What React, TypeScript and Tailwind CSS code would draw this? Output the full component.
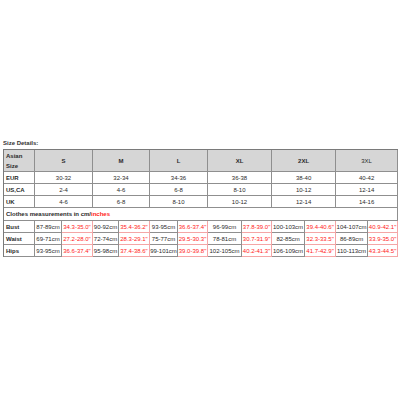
import React from "react";

const sizes = ["S", "M", "L", "XL", "2XL", "3XL"];
const eur = ["30-32", "32-34", "34-36", "36-38", "38-40", "40-42"];
const us = ["2-4", "4-6", "6-8", "8-10", "10-12", "12-14"];
const uk = ["4-6", "6-8", "8-10", "10-12", "12-14", "14-16"];

const meas: { label: string; vals: [string, string][] }[] = [
  {
    label: "Bust",
    vals: [
      ["87-89cm", "34.3-35.0\""],
      ["90-92cm", "35.4-36.2\""],
      ["93-95cm", "36.6-37.4\""],
      ["96-99cm", "37.8-39.0\""],
      ["100-103cm", "39.4-40.6\""],
      ["104-107cm", "40.9-42.1\""],
    ],
  },
  {
    label: "Waist",
    vals: [
      ["69-71cm", "27.2-28.0\""],
      ["72-74cm", "28.3-29.1\""],
      ["75-77cm", "29.5-30.3\""],
      ["78-81cm", "30.7-31.9\""],
      ["82-85cm", "32.3-33.5\""],
      ["86-89cm", "33.9-35.0\""],
    ],
  },
  {
    label: "Hips",
    vals: [
      ["93-95cm", "36.6-37.4\""],
      ["95-98cm", "37.4-38.6\""],
      ["99-101cm", "39.0-39.8\""],
      ["102-105cm", "40.2-41.3\""],
      ["106-109cm", "41.7-42.9\""],
      ["110-113cm", "43.3-44.5\""],
    ],
  },
];

const cell = "border-r border-b border-[#8f8f8f] p-0 align-middle";
const pink = "border-r border-b border-[#f4a6a6] p-0 align-middle";

export default function App() {
  return (
    <div
      className="bg-white w-[400px] h-[400px] pt-[139px] px-[3px] text-[6px] leading-[8px] text-[#2a2a2a]"
      style={{ fontFamily: '"Liberation Sans", Arial, sans-serif' }}
    >
      <div className="font-bold h-[10px] text-[#333]">Size Details:</div>
      <table className="border-separate border-spacing-0 table-fixed w-[394px] border-t border-l border-[#7a7a7a]">
        <colgroup>
          <col className="w-[31px]" />
          <col className="w-[27px]" />
          <col className="w-[31px]" />
          <col className="w-[26px]" />
          <col className="w-[31px]" />
          <col className="w-[28px]" />
          <col className="w-[30px]" />
          <col className="w-[34px]" />
          <col className="w-[30px]" />
          <col className="w-[33px]" />
          <col className="w-[31px]" />
          <col className="w-[32px]" />
          <col className="w-[30px]" />
        </colgroup>
        <tbody>
          <tr className="h-[22px] bg-[#d6d6d6]">
            <td className={`${cell} font-bold text-left pl-[2px] leading-[10px]`}>
              Asian
              <br />
              Size
            </td>
            {sizes.map((s, i) => (
              <td
                key={s}
                colSpan={2}
                className={`${cell} text-center ${i === 5 ? "font-normal" : "font-bold"}`}
              >
                {s}
              </td>
            ))}
          </tr>
          {[
            ["EUR", eur],
            ["US,CA", us],
            ["UK", uk],
          ].map(([label, vals]) => (
            <tr key={label as string} className="h-[12px]">
              <td className={`${cell} font-bold text-left pl-[2px]`}>{label as string}</td>
              {(vals as string[]).map((v, i) => (
                <td key={i} colSpan={2} className={`${cell} text-center`}>
                  {v}
                </td>
              ))}
            </tr>
          ))}
          <tr className="h-[13px]">
            <td colSpan={13} className={`${cell} font-bold text-left pl-[2px]`}>
              Clothes measurements in cm/<span className="text-[#ff1a1a]">inches</span>
            </td>
          </tr>
          {meas.map((m) => (
            <tr key={m.label} className="h-[12px]">
              <td className={`${cell} font-bold text-left pl-[2px]`}>{m.label}</td>
              {m.vals.map(([cm, inch], i) => (
                <React.Fragment key={i}>
                  <td className={`${cell} text-center whitespace-nowrap`}>{cm}</td>
                  <td className={`${pink} text-center whitespace-nowrap text-[#ff1a1a]`}>{inch}</td>
                </React.Fragment>
              ))}
            </tr>
          ))}
        </tbody>
      </table>
    </div>
  );
}
